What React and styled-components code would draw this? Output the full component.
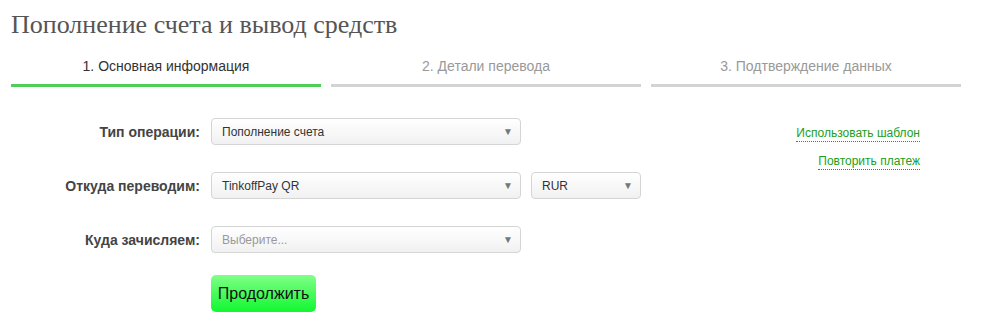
import React from 'react';
import styled, { createGlobalStyle } from 'styled-components';

const GlobalStyle = createGlobalStyle`
  body {
    margin: 0;
    background: #fff;
    font-family: 'Liberation Sans', Arial, sans-serif;
  }
`;

const Page = styled.div`
  width: 984px;
  padding: 0 0 0 11px;
  box-sizing: border-box;
`;

const Title = styled.h1`
  margin: 0;
  padding-top: 10px;
  font-family: 'Liberation Serif', 'Times New Roman', serif;
  font-weight: normal;
  font-size: 26px;
  line-height: 30px;
  color: #555;
`;

const Steps = styled.div`
  display: flex;
  gap: 10px;
  margin-top: 18px;
  width: 950px;
`;

const Step = styled.div`
  flex: 1;
  text-align: center;
  font-size: 14px;
  line-height: 16px;
  color: ${p => (p.$active ? '#333' : '#999')};
  padding-bottom: 10px;
  border-bottom: 3px solid transparent;
  border-image: ${p =>
    p.$active
      ? 'linear-gradient(#27b533, #4fcf59) 1'
      : 'linear-gradient(#a0a0a0, #d4d4d4) 1'};
`;

const Body = styled.div`
  display: flex;
  justify-content: space-between;
  margin-top: 31px;
  width: 909px;
`;

const Form = styled.div`
  display: grid;
  grid-template-columns: 189px auto;
  column-gap: 11px;
  row-gap: 27px;
  align-items: center;
`;

const Label = styled.label`
  text-align: right;
  font-size: 14px;
  font-weight: bold;
  color: #444;
`;

const Controls = styled.div`
  display: flex;
  gap: 10px;
`;

const Select = styled.div`
  width: ${p => p.$w}px;
  height: 27px;
  box-sizing: border-box;
  border: 1px solid #d5d5d5;
  border-radius: 4px;
  background: linear-gradient(#fff, #f1f1f3);
  display: flex;
  align-items: center;
  padding: 0 7px 0 10px;
  font-size: 12px;
  color: ${p => (p.$placeholder ? '#999' : '#333')};
`;

const Arrow = styled.span`
  margin-left: auto;
  font-size: 10px;
  color: #777;
`;

const Button = styled.button`
  grid-column: 2;
  justify-self: start;
  margin-top: -5px;
  width: 105px;
  height: 37px;
  border: none;
  border-radius: 5px;
  background: linear-gradient(#80ff88, #10f830);
  font-family: 'Liberation Sans', Arial, sans-serif;
  font-size: 16px;
  color: #111;
  cursor: pointer;
`;

const Aside = styled.div`
  display: flex;
  flex-direction: column;
  align-items: flex-end;
  gap: 11px;
  padding-top: 7px;
`;

const TplLink = styled.a`
  font-size: 12px;
  line-height: 16px;
  color: #1aa01a;
  text-decoration: none;
  border-bottom: 1px dotted #1aa01a;
  cursor: pointer;
`;

const Dropdown = ({ w, children, placeholder }) => (
  <Select $w={w} $placeholder={placeholder}>
    {children}
    <Arrow>▼</Arrow>
  </Select>
);

export default function App() {
  return (
    <Page>
      <GlobalStyle />
      <Title>Пополнение счета и вывод средств</Title>
      <Steps>
        <Step $active>1. Основная информация</Step>
        <Step>2. Детали перевода</Step>
        <Step>3. Подтверждение данных</Step>
      </Steps>
      <Body>
        <Form>
          <Label>Тип операции:</Label>
          <Controls>
            <Dropdown w={310}>Пополнение счета</Dropdown>
          </Controls>
          <Label>Откуда переводим:</Label>
          <Controls>
            <Dropdown w={310}>TinkoffPay QR</Dropdown>
            <Dropdown w={110}>RUR</Dropdown>
          </Controls>
          <Label>Куда зачисляем:</Label>
          <Controls>
            <Dropdown w={310} placeholder>Выберите...</Dropdown>
          </Controls>
          <Button>Продолжить</Button>
        </Form>
        <Aside>
          <TplLink>Использовать шаблон</TplLink>
          <TplLink>Повторить платеж</TplLink>
        </Aside>
      </Body>
    </Page>
  );
}
